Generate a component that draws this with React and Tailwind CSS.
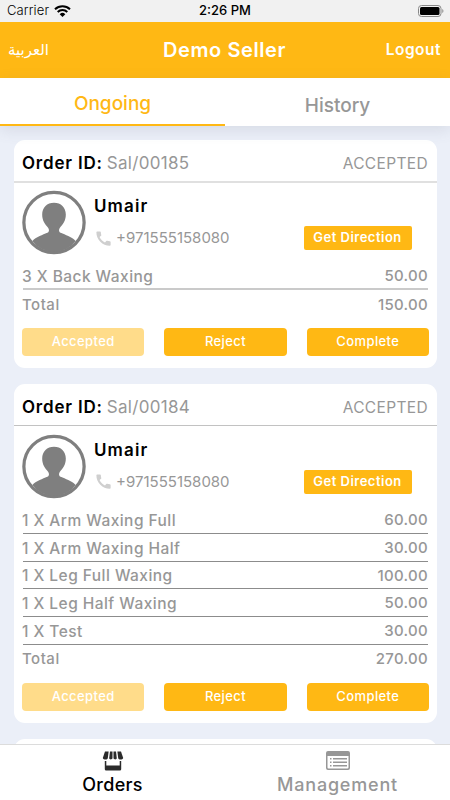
import React from 'react'
import { MdCall } from 'react-icons/md'

const orders = [
  {
    id: 'Sal/00185',
    items: [['3 X Back Waxing', '50.00']],
    total: '150.00',
    headerDivider: 'h-[43px] border-b-2 border-[#e0e0e0]',
    divider: 'border-b-2 border-[#cacaca]',
  },
  {
    id: 'Sal/00184',
    items: [
      ['1 X Arm Waxing Full', '60.00'],
      ['1 X Arm Waxing Half', '30.00'],
      ['1 X Leg Full Waxing', '100.00'],
      ['1 X Leg Half Waxing', '50.00'],
      ['1 X Test', '30.00'],
    ],
    total: '270.00',
    headerDivider: 'mb-px h-[42px] border-b border-[#c2c2c2]',
    divider: 'border-b border-[#8c8c8c]',
  },
]

function StatusBar() {
  return (
    <div className="relative flex h-[22px] shrink-0 items-center justify-between bg-[#f1f1f1] pl-[7px] pr-[6px] text-[13px] text-black">
      <div className="flex items-center gap-[5px]">
        <span className="font-light tracking-[0.1px]">Carrier</span>
        <svg width="17" height="12" viewBox="0 0 17 12">
          <path
            d="M1 4.2a10.8 10.8 0 0 1 15 0M3.7 6.9a7 7 0 0 1 9.6 0"
            fill="none"
            stroke="#000"
            strokeWidth="2"
          />
          <path d="M8.5 12L5.7 9.2a4 4 0 0 1 5.6 0z" />
        </svg>
      </div>
      <div className="absolute inset-x-0 text-center font-medium">2:26 PM</div>
      <svg width="26" height="12" viewBox="0 0 26 12">
        <rect x=".5" y=".5" width="22.5" height="11" rx="3" fill="none" stroke="#888" />
        <rect x="2" y="2" width="19.5" height="8" rx="1.5" />
        <path d="M24.3 4v4c1.5-.6 1.5-3.4 0-4z" fill="#888" />
      </svg>
    </div>
  )
}

function Avatar() {
  return (
    <svg className="shrink-0" width="64" height="65" viewBox="0 0 65 65">
      <circle cx="32.5" cy="32.5" r="30.6" fill="#fff" stroke="#7f7f7f" strokeWidth="3.3" />
      <path
        d="M32.5 12.5c7 0 12 4.6 12 12 0 6-2.8 10-6 13.3-1.3 1.7-1.3 4.2.8 5.2 5 2.3 10.500 3.700 15.200 8.300A27.500 27.500 0 0 1 10.500 51.300C15.200 46.700 20.700 45.300 25.700 43c2.100-1 2.100-3.500.8-5.200-3.200-3.300-6-7.300-6-13.300 0-7.400 5-12 12-12z"
        fill="#7f7f7f"
      />
    </svg>
  )
}

function OrderCard({ order }) {
  return (
    <div className="rounded-[11px] bg-white pb-3 text-[#979797]">
      <div
        className={`flex items-center justify-between pl-2 pr-[9px] pt-[6px] ${order.headerDivider}`}
      >
        <div className="whitespace-pre text-[17px]">
          <span className="font-semibold tracking-[0.8px] text-black">Order ID:</span>
          <span className="ml-1 tracking-[0.3px]">{order.id}</span>
        </div>
        <div className="text-[15.5px] tracking-[0.35px]">ACCEPTED</div>
      </div>
      <div className="flex h-[79.25px] pl-2 pr-[25.5px] pt-[7px]">
        <Avatar />
        <div className="ml-2 flex-1">
          <div className="mt-[4px] text-[17px] font-semibold leading-6 tracking-[1.1px] text-black">
            Umair
          </div>
          <div className="mt-[8px] flex h-6 items-center justify-between">
            <div className="flex items-center gap-[3px] text-[15px]">
              <MdCall className="text-[19px] text-[#cfcfcf]" />
              +971555158080
            </div>
            <button className="h-6 w-[108px] whitespace-nowrap rounded-[2px] bg-[#ffb814] text-[13px] font-semibold tracking-[0.5px] text-white">
              Get Direction
            </button>
          </div>
        </div>
      </div>
      <div className="px-[9px] text-[15px] font-medium tracking-[0.3px]">
        {order.items.map(([name, price]) => (
          <div
            key={name}
            className={`flex h-[27.75px] items-center justify-between pt-[2px] ${order.divider}`}
          >
            <span className="-ml-px text-[15.5px] tracking-[0.45px]">{name}</span>
            <span>{price}</span>
          </div>
        ))}
        <div className="flex h-[27.75px] items-center justify-between pt-[2px]">
          <span className="-ml-px tracking-[0.5px]">Total</span>
          <span>{order.total}</span>
        </div>
      </div>
      <div className="mt-[10px] grid grid-cols-3 gap-5 px-2 text-[13px] font-medium tracking-[0.4px] text-white">
        <button className="h-7 rounded-[4px] bg-[#ffdc8a]">Accepted</button>
        <button className="h-7 rounded-[4px] bg-[#ffb814]">Reject</button>
        <button className="h-7 rounded-[4px] bg-[#ffb814]">Complete</button>
      </div>
    </div>
  )
}

function StoreIcon() {
  return (
    <svg width="22" height="20" viewBox="0 0 22 20" fill="#2b2b2b">
      <path d="M3 .5h3.6L5.8 7.3C5.2 9 1.5 9 .8 7z" />
      <path d="M8 .5h2.500v6.8c-.5 1.500-3 1.500-3.300 0z" />
      <path d="M11.5.5H14l.8 6.8c-.3 1.500-2.800 1.500-3.300 0z" />
      <path d="M15.4.5H19l2.200 6.500c-.7 2-4.400 2-5 .3z" />
      <path d="M2.800 10h1.500v4.500h13.400V10h1.500v8.200a1.300 1.300 0 0 1-1.300 1.300H4.100a1.300 1.300 0 0 1-1.300-1.300z" />
    </svg>
  )
}

function ListIcon() {
  return (
    <svg width="24" height="19" viewBox="0 0 24 19" fill="#979797">
      <path
        fillRule="evenodd"
        d="M2 0h20a2 2 0 0 1 2 2v15a2 2 0 0 1-2 2H2a2 2 0 0 1-2-2V2a2 2 0 0 1 2-2zM1.5 5v11.5a1 1 0 0 0 1 1h19a1 1 0 0 0 1-1V5z"
      />
      <path d="M4 7h1.5v1.5H4zM7 7h14v1.5H7zM4 10.5h1.5V12H4zM7 10.5h14V12H7zM4 14h1.5v1.5H4zM7 14h14v1.5H7z" />
    </svg>
  )
}

export default function App() {
  return (
    <div className="flex h-[800px] w-[450px] flex-col overflow-hidden bg-[#ebeff8] font-['Inter',sans-serif]">
      <StatusBar />
      <header className="grid h-14 shrink-0 grid-cols-[1fr_auto_1fr] items-center bg-[#ffb814] pl-2 pr-[9px] text-white">
        <span className="text-[15px] font-['DejaVu_Sans',sans-serif]" lang="ar">
          العربية
        </span>
        <h1 className="text-[20px] font-semibold tracking-[0.6px]">Demo Seller</h1>
        <span className="text-right text-[15.5px] font-semibold tracking-[0.5px]">Logout</span>
      </header>
      <nav className="z-10 grid h-12 shrink-0 grid-cols-2 bg-white text-center text-[19px] font-medium shadow-[0_4px_14px_rgba(90,100,120,0.14)]">
        <div className="border-b-2 border-[#ffb814] pt-3 text-[#ffb814]">Ongoing</div>
        <div className="pt-[14px] text-[#979797]">History</div>
      </nav>
      <main className="flex min-h-0 flex-1 flex-col gap-4 overflow-hidden pl-[14px] pr-[13px] pt-[14px]">
        {orders.map((order) => (
          <OrderCard key={order.id} order={order} />
        ))}
        <div className="h-20 shrink-0 rounded-[11px] bg-white" />
      </main>
      <footer className="grid h-14 shrink-0 grid-cols-2 border-t border-[#dcdcdc] bg-white text-[18px] font-medium">
        <div className="flex flex-col items-center pt-[6px] text-black">
          <StoreIcon />
          <span className="mt-[2px] leading-6 tracking-[0.3px]">Orders</span>
        </div>
        <div className="flex flex-col items-center pt-[6px] text-[#979797]">
          <ListIcon />
          <span className="mt-[3px] leading-6 tracking-[0.8px]">Management</span>
        </div>
      </footer>
    </div>
  )
}
